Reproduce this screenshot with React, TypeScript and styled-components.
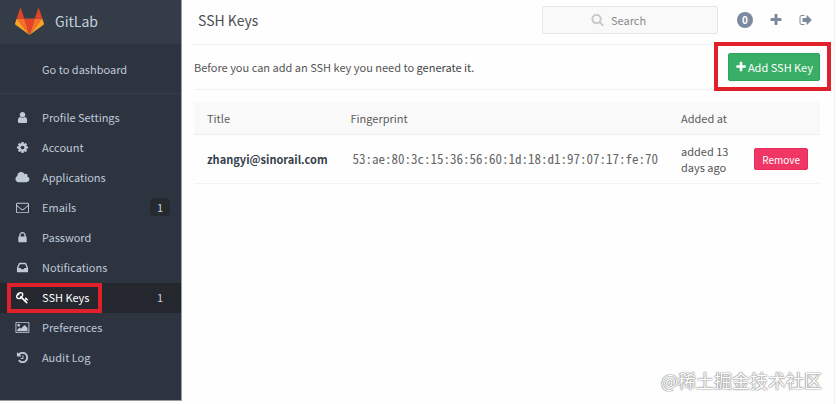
import React from "react";
import styled, { createGlobalStyle } from "styled-components";

const GlobalStyle = createGlobalStyle`
  * { box-sizing: border-box; }
  body {
    margin: 0;
    background: #fefefe;
    color: #555;
    font-family: "Noto Sans CJK SC", "Open Sans", sans-serif;
    font-size: 11px;
    line-height: 16px;
  }
  button, input { font-family: inherit; }
`;

const icons = {
  user: { w: 1792, d: "M1536 1399q0 109-62.5 187t-150.5 78h-854q-88 0-150.5-78t-62.5-187q0-85 8.5-160.5t31.5-152 58.5-131 94-89 134.5-34.5q131 128 313 128t313-128q76 0 134.5 34.5t94 89 58.5 131 31.5 152 8.5 160.5zm-256-887q0 159-112.5 271.5t-271.5 112.5-271.5-112.5-112.5-271.5 112.5-271.5 271.5-112.5 271.5 112.5 112.5 271.5z" },
  cog: { w: 1792, d: "M1152 896q0-106-75-181t-181-75-181 75-75 181 75 181 181 75 181-75 75-181zm512-109v222q0 12-8 23t-20 13l-185 28q-19 54-39 91 35 50 107 138 10 12 10 25t-9 23q-27 37-99 108t-94 71q-12 0-26-9l-138-108q-44 23-91 38-16 136-29 186-7 28-36 28h-222q-14 0-24.5-8.5t-11.5-21.5l-28-184q-49-16-90-37l-141 107q-10 9-25 9-14 0-25-11-126-114-165-168-7-10-7-23 0-12 8-23 15-21 51-66.5t54-70.5q-27-50-41-99l-183-27q-13-2-21-12.5t-8-23.5v-222q0-12 8-23t19-13l186-28q14-46 39-92-40-57-107-138-10-12-10-24 0-10 9-23 26-36 98.5-107.5t94.5-71.5q13 0 26 10l138 107q44-23 91-38 16-136 29-186 7-28 36-28h222q14 0 24.5 8.5t11.5 21.5l28 184q49 16 90 37l142-107q9-9 24-9 13 0 25 10 129 119 165 170 7 8 7 22 0 12-8 23-15 21-51 66.5t-54 70.5q26 50 41 98l183 28q13 2 21 12.5t8 23.5z" },
  cloud: { w: 2048, d: "M1984 1152q0 159-112.5 271.5t-271.5 112.5h-1088q-185 0-316.5-131.5t-131.5-316.5q0-132 71-241.5t187-163.5q-2-28-2-43 0-212 150-362t362-150q158 0 286.5 88t187.5 230q70-62 166-62 106 0 181 75t75 181q0 75-41 138 129 30 213 134.5t84 239.5z" },
  envelope: { w: 1792, d: "M1664 1504v-768q-32 36-69 66-268 206-426 338-51 43-83 67t-86.5 48.5-102.5 24.5h-2q-48 0-102.5-24.5t-86.5-48.5-83-67q-158-132-426-338-37-30-69-66v768q0 13 9.5 22.5t22.5 9.5h1472q13 0 22.5-9.5t9.5-22.5zm0-1051v-24.5l-.5-13-3-12.5-5.5-9-9-7.5-14-2.5h-1472q-13 0-22.5 9.5t-9.5 22.5q0 168 147 284 193 152 401 317 6 5 35 29.5t46 37.5 44.5 31.5 50.5 27.5 43 9h2q20 0 43-9t50.5-27.5 44.5-31.5 46-37.5 35-29.5q208-165 401-317 54-43 100.5-115.5t46.5-131.5zm128-37v1088q0 66-47 113t-113 47h-1472q-66 0-113-47t-47-113v-1088q0-66 47-113t113-47h1472q66 0 113 47t47 113z" },
  lock: { w: 1792, d: "M640 768h512v-192q0-106-75-181t-181-75-181 75-75 181v192zm832 96v576q0 40-28 68t-68 28h-960q-40 0-68-28t-28-68v-576q0-40 28-68t68-28h32v-192q0-184 132-316t316-132 316 132 132 316v192h32q40 0 68 28t28 68z" },
  inbox: { w: 1792, d: "M1151 960h316q-1-3-2.5-8t-2.5-8l-212-496h-708l-212 496q-1 2-2.5 8t-2.5 8h316l95 192h320zm513 30v482q0 26-19 45t-45 19h-1408q-26 0-45-19t-19-45v-482q0-62 25-123l238-552q10-25 36.5-42t52.5-17h832q26 0 52.5 17t36.5 42l238 552q25 61 25 123z" },
  key: { w: 1792, d: "M832 512q0-80-56-136t-136-56-136 56-56 136q0 42 19 83-41-19-83-19-80 0-136 56t-56 136 56 136 136 56 136-56 56-136q0-42-19-83 41 19 83 19 80 0 136-56t56-136zm851 704q0 17-49 66t-66 49q-9 0-28.5-16t-36.5-33-38.5-40-24.5-26l-96 96 220 220q28 28 28 68 0 42-39 81t-81 39q-40 0-68-28l-671-671q-176 131-365 131-163 0-265.5-102.5t-102.5-265.5q0-160 95-313t248-248 313-95q163 0 265.5 102.5t102.5 265.5q0 189-131 365l355 355 96-96q-3-3-26-24.5t-40-38.5-33-36.5-16-28.5q0-17 49-66t66-49q13 0 23 10 6 6 46 44.5t82 79.5 86.5 86 73 78 28.5 41z" },
  picture: { w: 2048, d: "M704 576q0 80-56 136t-136 56-136-56-56-136 56-136 136-56 136 56 56 136zm1024 384v448h-1408v-192l320-320 160 160 512-512zm96-704h-1600q-13 0-22.5 9.5t-9.5 22.5v1216q0 13 9.5 22.5t22.5 9.5h1600q13 0 22.5-9.5t9.5-22.5v-1216q0-13-9.5-22.5t-22.5-9.5zm160 32v1216q0 66-47 113t-113 47h-1600q-66 0-113-47t-47-113v-1216q0-66 47-113t113-47h1600q66 0 113 47t47 113z" },
  history: { w: 1792, d: "M1664 896q0 156-61 298t-164 245-245 164-298 61q-172 0-327-72.5t-264-204.5q-7-10-6.5-22.5t8.5-20.5l137-138q10-9 25-9 16 2 23 12 73 95 179 147t225 52q104 0 198.5-40.5t163.5-109.5 109.5-163.5 40.5-198.5-40.5-198.5-109.5-163.5-163.5-109.5-198.5-40.5q-98 0-188 35.5t-160 101.5l137 138q31 30 14 69-17 40-59 40h-448q-26 0-45-19t-19-45v-448q0-42 40-59 39-17 69 14l130 129q107-101 244.5-156.5t284.5-55.5q156 0 298 61t245 164 164 245 61 298zm-640-288v448q0 14-9 23t-23 9h-320q-14 0-23-9t-9-23v-64q0-14 9-23t23-9h224v-352q0-14 9-23t23-9h64q14 0 23 9t9 23z" },
  plus: { w: 1792, d: "M1600 736v192q0 40-28 68t-68 28h-416v416q0 40-28 68t-68 28h-192q-40 0-68-28t-28-68v-416h-416q-40 0-68-28t-28-68v-192q0-40 28-68t68-28h416v-416q0-40 28-68t68-28h192q40 0 68 28t28 68v416h416q40 0 68 28t28 68z" },
  search: { w: 1792, d: "M1216 832q0-185-131.5-316.5t-316.5-131.5-316.5 131.5-131.5 316.5 131.5 316.5 316.5 131.5 316.5-131.5 131.5-316.5zm512 832q0 52-38 90t-90 38q-54 0-90-38l-343-342q-179 124-399 124-143 0-273.5-55.5t-225-150-150-225-55.5-273.5 55.5-273.5 150-225 225-150 273.5-55.5 273.5 55.5 225 150 150 225 55.5 273.5q0 220-124 399l343 343q37 37 37 90z" },
  signOut: { w: 1792, d: "M704 1440q0 4 1 20t.5 26.5-3 23.5-10 19.5-20.5 6.5h-320q-119 0-203.5-84.5t-84.5-203.5v-704q0-119 84.5-203.5t203.5-84.5h320q13 0 22.5 9.5t9.5 22.5q0 4 1 20t.5 26.5-3 23.5-10 19.5-20.5 6.5h-320q-66 0-113 47t-47 113v704q0 66 47 113t113 47h312l11.5 1 11.5 3 8 5.5 7 9 2 13.5zm928-544q0 26-19 45l-544 544q-19 19-45 19t-45-19-19-45v-288h-448q-26 0-45-19t-19-45v-384q0-26 19-45t45-19h448v-288q0-26 19-45t45-19 45 19l544 544q19 19 19 45z" },
};

type IconName = keyof typeof icons;

const Svg = styled.svg<{ $size: number }>`
  display: block;
  height: ${(p) => p.$size}px;
  fill: currentColor;
  flex: none;
`;

function Icon({ name, size = 13 }: { name: IconName; size?: number }) {
  const { w, d } = icons[name];
  return (
    <Svg $size={size} viewBox={`0 0 ${w} 1792`} aria-hidden="true">
      <path d={d} />
    </Svg>
  );
}

const Page = styled.div`
  position: relative;
  display: flex;
  align-items: flex-start;
  min-height: 100vh;
`;

const Sidebar = styled.aside`
  flex: none;
  width: 182px;
  padding-bottom: 27px;
  background: #2d3440;
  border: solid #9a9ca4;
  border-width: 0 1px 1px 0;
`;

const Brand = styled.a`
  display: flex;
  align-items: center;
  gap: 11px;
  height: 44px;
  padding: 0 0 2px 15px;
  background: #343d47;
  color: #c4d0de;
  font-size: 14px;
  line-height: 20px;
  text-decoration: none;
`;

const Tanuki = styled.svg`
  display: block;
  width: 29px;
  height: 27px;
`;

const Dashboard = styled.a`
  display: block;
  padding: 17px 0 16px 42px;
  border-bottom: 1px solid #363e4a;
  color: #bfc9d8;
  line-height: 16px;
  text-decoration: none;
`;

const NavList = styled.ul`
  list-style: none;
  margin: 9px 0 0;
  padding: 0;
`;

const NavLink = styled.a<{ $active?: boolean }>`
  position: relative;
  display: grid;
  grid-template-columns: 15px 1fr auto;
  column-gap: 12px;
  align-items: center;
  height: 30px;
  padding: 0 11px 2px 15px;
  background: ${(p) => (p.$active ? "#24272d" : "transparent")};
  color: ${(p) => (p.$active ? "#fff" : "#bfc9d8")};
  text-decoration: none;
`;

const IconSlot = styled.span`
  display: flex;
  justify-content: center;
`;

const Count = styled.span<{ $boxed: boolean }>`
  padding: 1px 7px;
  border-radius: 4px;
  background: ${(p) => (p.$boxed ? "#252a31" : "transparent")};
  color: #c9d0da;
`;

const NavHighlight = styled.span`
  position: absolute;
  inset: 0 79px 0 7px;
  border: 4px solid #e0202a;
`;

const Main = styled.main`
  flex: 1;
  min-width: 0;
  min-height: 100vh;
  margin-right: 1px;
  padding: 0 14px 0 12px;
  border-right: 1px solid #f0f0f0;
`;

const Header = styled.header`
  display: flex;
  align-items: center;
  height: 45px;
  margin: 0 -14px 0 -2px;
  padding: 0 21px 4px 6px;
  border-bottom: 1px solid #efefef;
`;

const Title = styled.h1`
  margin: 0;
  flex: 1;
  color: #4c4e54;
  font-size: 14px;
  font-weight: 400;
  line-height: 20px;
`;

const SearchBox = styled.label`
  position: relative;
  display: block;
  width: 176px;
  color: #c8c8c8;
`;

const SearchIcon = styled.span`
  position: absolute;
  left: 49px;
  top: 7px;
`;

const SearchInput = styled.input`
  display: block;
  width: 100%;
  height: 28px;
  padding: 0 8px 0 68px;
  border: 1px solid #e6e6e6;
  border-radius: 2px;
  background: #f9f9f9;
  color: #555;
  font-size: 11px;
  &::placeholder { color: #8a8a8a; opacity: 1; }
`;

const Tools = styled.div`
  display: flex;
  align-items: center;
  gap: 16px;
  margin-left: 19px;
  color: #7b8a9e;
`;

const TodoCount = styled.a`
  width: 16px;
  height: 16px;
  border-radius: 8px;
  background: #7b8a9e;
  color: #fff;
  font-size: 10px;
  font-weight: 700;
  line-height: 16px;
  text-align: center;
  text-decoration: none;
`;

const ToolButton = styled.button`
  padding: 0;
  border: 0;
  background: none;
  color: inherit;
`;

const Intro = styled.div`
  display: flex;
  align-items: center;
  justify-content: space-between;
  height: 45px;
  padding-bottom: 1px;
  border-bottom: 1px solid #f1f1f1;

  p { margin: 0; }
  a { color: #444; text-decoration: none; }
`;

const AddWrap = styled.div`
  position: relative;
`;

const AddHighlight = styled.span`
  position: absolute;
  inset: -11px -11px -10px -14px;
  border: 4px solid #e0202a;
  pointer-events: none;
`;

const AddButton = styled.button`
  display: flex;
  align-items: center;
  gap: 1px;
  height: 28px;
  padding: 0 6px;
  border: 1px solid #31a35c;
  border-radius: 2px;
  background: #38ae67;
  color: #fff;
  font-size: 11px;
`;

const Table = styled.table`
  width: 100%;
  margin-top: 12px;
  border-collapse: separate;
  border-spacing: 0;
`;

const Th = styled.th`
  padding: 8px 10px 8px 13px;
  border-bottom: 1px solid #eee;
  background: #f9f9f9;
  color: #5c5c5c;
  font-weight: 400;
  text-align: left;
  white-space: nowrap;
`;

const Td = styled.td<{ $wrap?: boolean }>`
  padding: 8px 10px 8px 13px;
  border-bottom: 1px solid #f3f3f3;
  white-space: ${(p) => (p.$wrap ? "normal" : "nowrap")};
  &:last-child { padding-right: 12px; }
`;

const KeyLink = styled.a`
  color: #35414b;
  font-weight: 700;
  text-decoration: none;
`;

const Fingerprint = styled.code`
  display: block;
  padding-left: 2px;
  color: #666;
  font-family: "Noto Sans Mono CJK SC", "Liberation Mono", monospace;
  font-size: 13px;
`;

const RemoveButton = styled.button`
  display: block;
  height: 22px;
  padding: 0 7px;
  border: 1px solid #e52c5a;
  border-radius: 2px;
  background: #f03665;
  color: #fff;
  font-size: 10px;
`;

const Watermark = styled.div`
  position: absolute;
  right: 14px;
  bottom: 12px;
  color: #fff;
  font-size: 18px;
  line-height: 24px;
  text-shadow: 0 0 1px #777, 0 0 1px #888, 0 0 2px #aaa;
`;

const navItems: { icon: IconName; label: string; count?: number; active?: boolean }[] = [
  { icon: "user", label: "Profile Settings" },
  { icon: "cog", label: "Account" },
  { icon: "cloud", label: "Applications" },
  { icon: "envelope", label: "Emails", count: 1 },
  { icon: "lock", label: "Password" },
  { icon: "inbox", label: "Notifications" },
  { icon: "key", label: "SSH Keys", count: 1, active: true },
  { icon: "picture", label: "Preferences" },
  { icon: "history", label: "Audit Log" },
];

export default function App() {
  return (
    <>
      <GlobalStyle />
      <Page>
        <Sidebar>
          <Brand href="#">
            <Tanuki viewBox="0 0 29 27" aria-hidden="true">
              <path d="M14.500 27 9.200 10.500h10.600z" fill="#e24329" />
              <path d="M14.500 27 9.200 10.500H1.700z" fill="#fc6d26" />
              <path d="M1.700 10.500.1 15.400a1.200 1.200 0 0 0 .4 1.300L14.500 27z" fill="#fca326" />
              <path d="M1.700 10.500h7.500L6 .7a.6.6 0 0 0-1.100 0z" fill="#e24329" />
              <path d="m14.500 27 5.300-16.500h7.500z" fill="#fc6d26" />
              <path d="m27.300 10.500 1.600 4.900a1.200 1.200 0 0 1-.4 1.300L14.500 27z" fill="#fca326" />
              <path d="M27.300 10.500h-7.500L23 .7a.6.6 0 0 1 1.100 0z" fill="#e24329" />
            </Tanuki>
            GitLab
          </Brand>
          <Dashboard href="#">Go to dashboard</Dashboard>
          <nav>
            <NavList>
              {navItems.map((item) => (
                <li key={item.label}>
                  <NavLink href="#" $active={item.active}>
                    <IconSlot>
                      <Icon name={item.icon} />
                    </IconSlot>
                    <span>{item.label}</span>
                    {item.count !== undefined && <Count $boxed={!item.active}>{item.count}</Count>}
                    {item.active && <NavHighlight />}
                  </NavLink>
                </li>
              ))}
            </NavList>
          </nav>
        </Sidebar>
        <Main>
          <Header>
            <Title>SSH Keys</Title>
            <SearchBox>
              <SearchIcon>
                <Icon name="search" size={13} />
              </SearchIcon>
              <SearchInput type="search" placeholder="Search" aria-label="Search" />
            </SearchBox>
            <Tools>
              <TodoCount href="#">0</TodoCount>
              <ToolButton aria-label="New">
                <Icon name="plus" size={14} />
              </ToolButton>
              <ToolButton aria-label="Sign out">
                <Icon name="signOut" size={14} />
              </ToolButton>
            </Tools>
          </Header>
          <Intro>
            <p>
              Before you can add an SSH key you need to <a href="#">generate it.</a>
            </p>
            <AddWrap>
              <AddButton>
                <Icon name="plus" size={12} />
                Add SSH Key
              </AddButton>
              <AddHighlight />
            </AddWrap>
          </Intro>
          <Table>
            <thead>
              <tr>
                <Th>Title</Th>
                <Th>Fingerprint</Th>
                <Th>Added at</Th>
                <Th />
              </tr>
            </thead>
            <tbody>
              <tr>
                <Td>
                  <KeyLink href="#">zhangyi@sinorail.com</KeyLink>
                </Td>
                <Td>
                  <Fingerprint>53:ae:80:3c:15:36:56:60:1d:18:d1:97:07:17:fe:70</Fingerprint>
                </Td>
                <Td $wrap>added 13 days ago</Td>
                <Td>
                  <RemoveButton>Remove</RemoveButton>
                </Td>
              </tr>
            </tbody>
          </Table>
        </Main>
        <Watermark>@稀土掘金技术社区</Watermark>
      </Page>
    </>
  );
}
